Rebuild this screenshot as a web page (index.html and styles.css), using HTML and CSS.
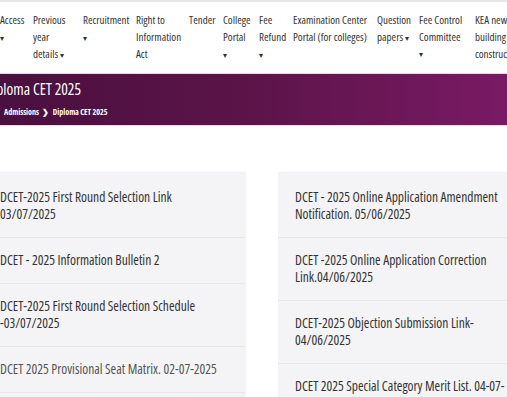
FILE: index.html
```html
<!DOCTYPE html>
<html lang="en">
<head>
    <meta charset="UTF-8">
    <meta name="viewport" content="width=device-width, initial-scale=1.0">
    <title>Diploma CET 2025</title>
    <link rel="stylesheet" href="styles.css">
</head>
<body>
    <!-- Menu -->
    <div class="topnav">
        <div class="nav-item w25">Access <span class="caret">▾</span></div>
        <div class="nav-item w42">Previous year details <span class="caret">▾</span></div>
        <div class="nav-item w45">Recruitment <span class="caret">▾</span></div>
        <div class="nav-item w45">Right to Information Act</div>
        <div class="nav-item w26">Tender</div>
        <div class="nav-item w28">College Portal <span class="caret">▾</span></div>
        <div class="nav-item w26">Fee Refund <span class="caret">▾</span></div>
        <div class="nav-item w76">Examination Center Portal (for colleges)</div>
        <div class="nav-item w34">Question papers <span class="caret">▾</span></div>
        <div class="nav-item w48">Fee Control Committee <span class="caret own-line">▾</span></div>
        <div class="nav-item w40">KEA new building construction</div>
    </div>

    <!-- Page title -->
    <div class="banner">
        <h1>Diploma CET 2025</h1>
        <div class="breadcrumb">
            <span>Admissions</span>
            <span class="sep">&#10095;</span>
            <span>Diploma CET 2025</span>
        </div>
    </div>

    <!-- Links -->
    <div class="columns">
        <div class="card">
            <div class="link-row">DCET-2025 First Round Selection Link 03/07/2025</div>
            <div class="link-row">DCET - 2025 Information Bulletin 2</div>
            <div class="link-row">DCET-2025 First Round Selection Schedule -03/07/2025</div>
            <div class="link-row visited">DCET 2025 Provisional Seat Matrix. 02-07-2025</div>
        </div>
        <div class="card">
            <div class="link-row">DCET - 2025 Online Application Amendment Notification. 05/06/2025</div>
            <div class="link-row">DCET -2025 Online Application Correction Link.04/06/2025</div>
            <div class="link-row">DCET-2025 Objection Submission Link-04/06/2025</div>
            <div class="link-row">DCET 2025 Special Category Merit List. 04-07-2025</div>
        </div>
    </div>
</body>
</html>
```

FILE: styles.css
```css
body {
    font-family: "Open Sans", Lato, sans-serif;
    font-stretch: 75%;
    margin: 0;
    color: #333;
    overflow: hidden;
    background: #fff;
}
.topnav {
    display: flex;
    gap: 8px;
    border-top: 2px solid #e8e8e8;
    padding: 9px 0 0 0;
    height: 62px;
    font-size: 11px;
    line-height: 17px;
}
.nav-item {
    flex: none;
}
.caret {
    font-size: 8px;
}
.caret.own-line {
    display: block;
}
.w25 { width: 25px; }
.w26 { width: 26px; }
.w28 { width: 28px; }
.w34 { width: 34px; }
.w40 { width: 40px; }
.w42 { width: 42px; }
.w45 { width: 45px; }
.w48 { width: 48px; }
.w76 { width: 76px; }
.banner {
    height: 47px;
    padding: 4px 0 0 0;
    background: linear-gradient(to right, #4a103f, #5c1449 50%, #7a1a65);
    border-top: 1px solid #f3d2ea;
    border-bottom: 1px solid #f3d2ea;
    color: #fff;
}
.banner h1 {
    margin: 0 0 0 -15px;
    font-size: 15.5px;
    font-weight: 400;
    line-height: 22px;
}
.breadcrumb {
    margin: 6px 0 0 4px;
    font-size: 8px;
    font-weight: 700;
    line-height: 12px;
}
.breadcrumb .sep {
    margin: 0 2px;
}
.columns {
    display: flex;
    gap: 33px;
    margin: 46px 0 0 -17px;
}
.card {
    flex: none;
    width: 262px;
    background: #f4f4f6;
    padding-top: 3px;
    box-shadow: 1px 0 2px rgba(0, 0, 0, 0.05);
}
.link-row {
    padding: 14px 22px 14px 17px;
    font-size: 13.5px;
    line-height: 17px;
    border-bottom: 1px solid #e7e7ea;
}
.visited {
    color: #555;
}
```
